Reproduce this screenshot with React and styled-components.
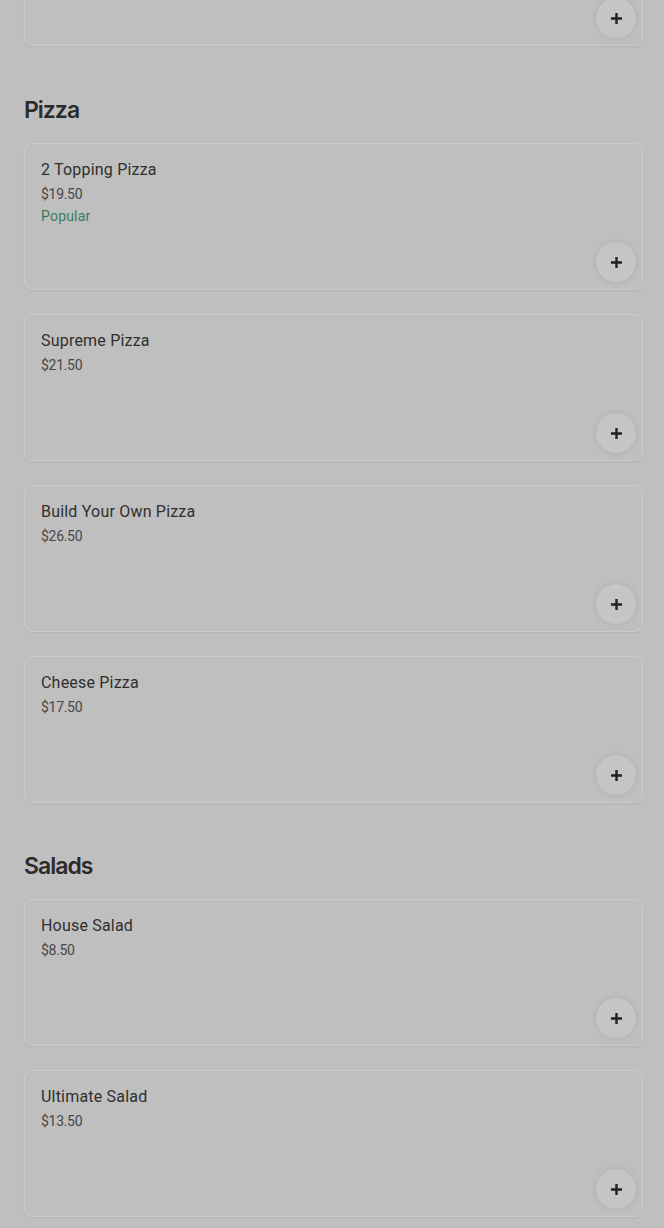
import styled, { createGlobalStyle } from "styled-components";

const GlobalStyle = createGlobalStyle`
  html, body {
    margin: 0;
    padding: 0;
    background: #bfbfbf;
    font-family: Roboto, "Liberation Sans", sans-serif;
    overflow: hidden;
  }
`;

const Page = styled.div`
  padding: 0 21px 0 24px;
  display: flex;
  flex-direction: column;
`;

const Section = styled.section`
  display: flex;
  flex-direction: column;
  gap: 24px;
  margin-top: ${(p) => (p.$first ? "-101px" : "0")};
  margin-bottom: ${(p) => (p.$first ? "48px" : "47px")};
`;

const SectionTitle = styled.h2`
  margin: 0 0 -7px;
  font-family: Inter, "Liberation Sans", sans-serif;
  font-size: 23px;
  line-height: 32px;
  font-weight: 600;
  letter-spacing: -1px;
  color: #2b2b2b;
`;

const Card = styled.div`
  position: relative;
  box-sizing: border-box;
  height: 147px;
  padding: 16px 16px;
  border: 1px solid #cbcbcb;
  border-radius: 8px;
  box-shadow: 0 1px 2px rgba(0, 0, 0, 0.07);
  display: flex;
  flex-direction: column;
`;

const ItemName = styled.div`
  font-size: 16px;
  line-height: 20px;
  font-weight: 400;
  letter-spacing: 0.2px;
  color: #2f2f2f;
  margin-bottom: 4px;
`;

const Price = styled.div`
  font-size: 14px;
  line-height: 20px;
  font-weight: 400;
  letter-spacing: -0.3px;
  color: #474747;
`;

const Badge = styled.div`
  margin-top: 2px;
  font-size: 14px;
  line-height: 20px;
  font-weight: 400;
  letter-spacing: 0.2px;
  color: #3c7c5c;
`;

const AddButton = styled.button`
  position: absolute;
  right: 6px;
  bottom: 7px;
  width: 40px;
  height: 40px;
  border: none;
  border-radius: 50%;
  background: #c5c5c5;
  box-shadow: 0 0 6px rgba(0, 0, 0, 0.1);
  display: flex;
  align-items: center;
  justify-content: center;
  padding: 0;
  color: #222;
`;

const PlusIcon = () => (
  <svg width="13" height="13" viewBox="0 0 13 13">
    <path d="M6.5 1v11M1 6.5h11" stroke="currentColor" strokeWidth="2.4" />
  </svg>
);

const menu = [
  {
    title: null,
    items: [{ id: "hidden", name: "", price: "" }],
  },
  {
    title: "Pizza",
    items: [
      { name: "2 Topping Pizza", price: "$19.50", popular: true },
      { name: "Supreme Pizza", price: "$21.50" },
      { name: "Build Your Own Pizza", price: "$26.50" },
      { name: "Cheese Pizza", price: "$17.50" },
    ],
  },
  {
    title: "Salads",
    items: [
      { name: "House Salad", price: "$8.50" },
      { name: "Ultimate Salad", price: "$13.50" },
    ],
  },
];

const MenuItem = ({ item }) => (
  <Card>
    {item.name && <ItemName>{item.name}</ItemName>}
    {item.price && <Price>{item.price}</Price>}
    {item.popular && <Badge>Popular</Badge>}
    <AddButton aria-label={`Add ${item.name || "item"}`}>
      <PlusIcon />
    </AddButton>
  </Card>
);

const App = () => (
  <>
    <GlobalStyle />
    <Page>
      {menu.map((section, i) => (
        <Section key={i} $first={i === 0}>
          {section.title && <SectionTitle>{section.title}</SectionTitle>}
          {section.items.map((item) => (
            <MenuItem key={item.id || item.name} item={item} />
          ))}
        </Section>
      ))}
    </Page>
  </>
);

export default App;
